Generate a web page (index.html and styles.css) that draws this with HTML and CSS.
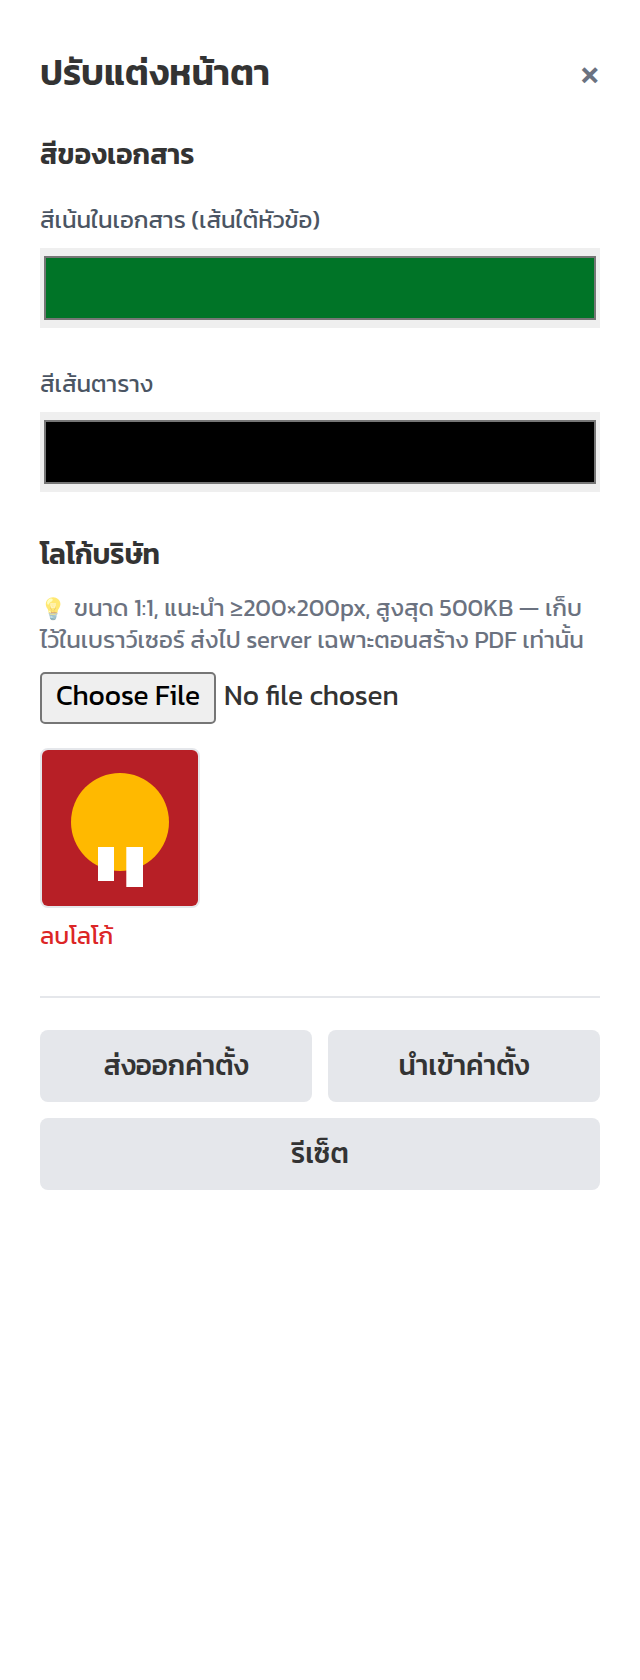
FILE: index.html
```html
<!DOCTYPE html>
<html lang="th">
<head>
<meta charset="utf-8">
<title>ปรับแต่งหน้าตา</title>
<link rel="stylesheet" href="styles.css">
</head>
<body>
<aside class="panel">
  <header class="panel-head">
    <h2 class="panel-title">ปรับแต่งหน้าตา</h2>
    <button class="close" type="button" aria-label="close">×</button>
  </header>
  <h3 class="section-title">สีของเอกสาร</h3>
  <div class="field">
    <label class="field-label">สีเน้นในเอกสาร (เส้นใต้หัวข้อ)</label>
    <input class="swatch" type="color" value="#007427">
  </div>
  <div class="field">
    <label class="field-label">สีเส้นตาราง</label>
    <input class="swatch" type="color" value="#000000">
  </div>
  <h3 class="section-title logo-title">โลโก้บริษัท</h3>
  <p class="hint">ขนาด 1:1, แนะนำ ≥200×200px, สูงสุด 500KB — เก็บไว้ในเบราว์เซอร์ ส่งไป server เฉพาะตอนสร้าง PDF เท่านั้น</p>
  <input class="file" type="file">
  <div class="logo-box">
    <svg class="logo" viewBox="0 0 156 156" aria-hidden="true">
      <rect width="156" height="156" fill="#b71f26"/>
      <circle cx="78" cy="72" r="49" fill="#ffb900"/>
      <rect x="56" y="97" width="16" height="34" fill="#fff"/>
      <rect x="84.300" y="97" width="16.700" height="40" fill="#fff"/>
    </svg>
  </div>
  <button class="remove" type="button">ลบโลโก้</button>
  <hr class="divider">
  <div class="actions">
    <button class="action" type="button">ส่งออกค่าตั้ง</button>
    <button class="action" type="button">นำเข้าค่าตั้ง</button>
    <button class="action wide" type="button">รีเซ็ต</button>
  </div>
</aside>
</body>
</html>
```
FILE: styles.css
```css
* { box-sizing: border-box; }
html, body { margin: 0; background: #fff; }
body { font-family: Kanit, "Noto Sans", sans-serif; color: #333; }
.panel { padding: 40px; min-height: 1680px; }
.panel-head { display: flex; justify-content: space-between; align-items: center; height: 64px; margin-bottom: 26px; }
.panel-title { margin: 0; font-size: 36px; line-height: 64px; font-weight: 600; color: #333; }
.close { border: 0; background: none; padding: 0; font: 700 36px/1 "Noto Sans", sans-serif; color: #6b7280; margin-top: 6px; }
.section-title { margin: 0 0 22px; font-size: 28px; line-height: 48px; font-weight: 600; color: #333; height: 48px; }
.field { margin-bottom: 36px; }
.field-label { display: block; font-size: 24px; line-height: 40px; height: 40px; margin-bottom: 8px; color: #4b5563; font-weight: 400; }
.swatch { display: block; width: 100%; height: 80px; border: 0; padding: 8px 4px; background: #efefef; }
.swatch::-webkit-color-swatch-wrapper { padding: 0; }
.swatch::-webkit-color-swatch { border: 2px solid #767676; }
.logo-title { margin-top: 38px; margin-bottom: 14px; }
.hint { margin: 0 0 16px; font-size: 24px; line-height: 32px; color: #6b7280; font-weight: 400; }
.hint::before { content: "💡"; display: inline-block; width: 34px; font-size: 21px; line-height: 1; opacity: .55; }
.file { display: block; width: 100%; height: 52px; font-family: inherit; font-size: 28px; color: #333; }
.file::file-selector-button { width: 176px; height: 52px; padding: 0 0 6px; margin-right: 8px; border: 2px solid #767676; border-radius: 5px; background: #efefef; color: #000; font-family: inherit; font-size: 28px; }
.logo-box { width: 160px; height: 160px; margin-top: 24px; border: 2px solid #e5e7eb; border-radius: 8px; overflow: hidden; }
.logo { display: block; width: 156px; height: 156px; }
.remove { display: block; border: 0; background: none; padding: 0; margin-top: 8px; font: 400 24px/40px Kanit, "Noto Sans", sans-serif; color: #dc2626; }
.divider { border: 0; border-top: 2px solid #e5e7eb; margin: 40px 0 32px; }
.actions { display: grid; grid-template-columns: 1fr 1fr; gap: 16px; }
.action { height: 72px; padding: 0 0 2px; border: 0; border-radius: 8px; background: #e5e7eb; color: #333; font: 500 28px/1 Kanit, "Noto Sans", sans-serif; }
.wide { grid-column: 1 / -1; }
```
